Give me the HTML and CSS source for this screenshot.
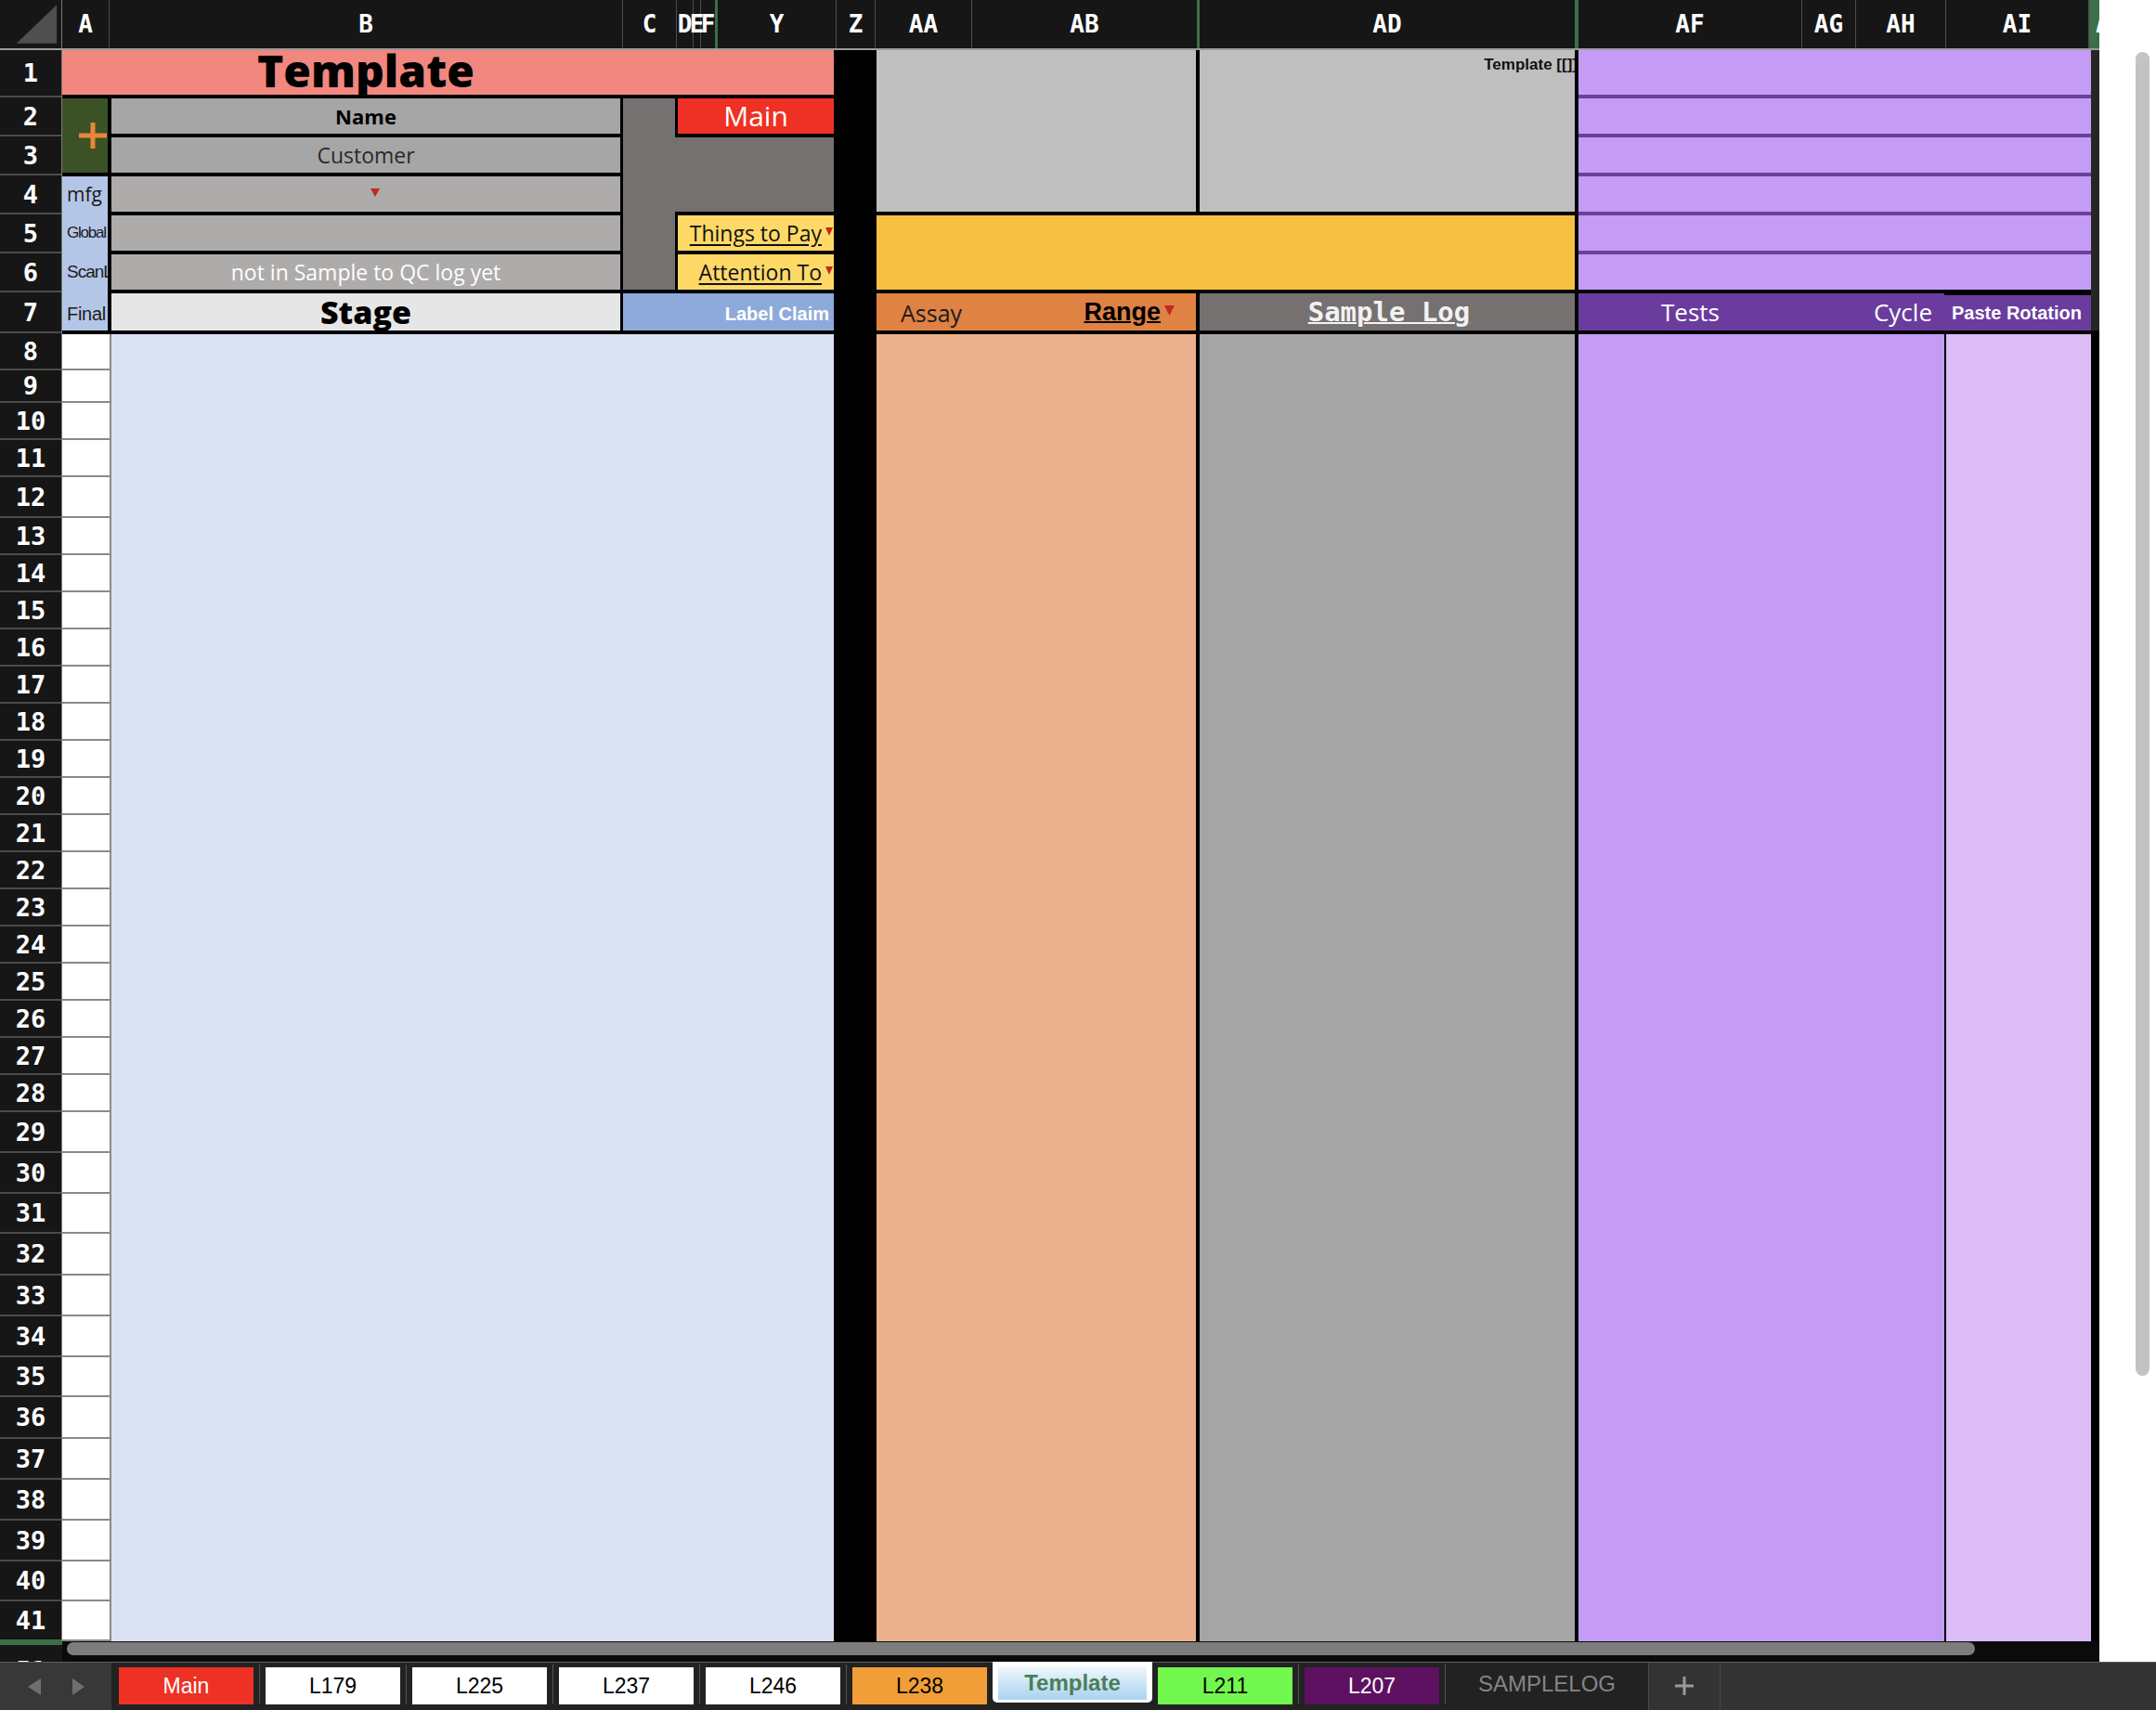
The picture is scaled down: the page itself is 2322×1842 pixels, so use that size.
FILE: index.html
```html
<!DOCTYPE html>
<html lang="en">
<head>
<meta charset="utf-8">
<title>Template</title>
<link rel="stylesheet" href="styles.css">
</head>
<body>
<div class="app">
  <div class="top">
    <div class="grid-area">
      <div class="colhdr">
        <div class="ch w-corner"><svg width="67" height="52" viewBox="0 0 67 52"><polygon points="18,47 62,5 62,47" fill="#4f4f4f"/></svg></div>
        <div class="ch w-a">A</div>
        <div class="ch w-b">B</div>
        <div class="ch w-c">C</div>
        <div class="ch w-d">D</div>
        <div class="ch w-e">E</div>
        <div class="ch w-f green">F</div>
        <div class="ch w-y">Y</div>
        <div class="ch w-z">Z</div>
        <div class="ch w-aa">AA</div>
        <div class="ch w-ab green">AB</div>
        <div class="ch w-ad green4">AD</div>
        <div class="ch w-af">AF</div>
        <div class="ch w-ag">AG</div>
        <div class="ch w-ah">AH</div>
        <div class="ch w-ai">AI</div>
        <div class="ch w-aj">A</div>
      </div>
      <div class="body">
        <div class="rowhdr">
          <div class="rh h51">1</div>
          <div class="rh h42">2</div>
          <div class="rh h42">3</div>
          <div class="rh h42">4</div>
          <div class="rh h42">5</div>
          <div class="rh h42">6</div>
          <div class="rh h44">7</div>
          <div class="rh h40">8</div>
          <div class="rh h35">9</div>
          <div class="rh h40">10</div>
          <div class="rh h40">11</div>
          <div class="rh h44">12</div>
          <div class="rh h40">13</div>
          <div class="rh h40">14</div>
          <div class="rh h40">15</div>
          <div class="rh h40">16</div>
          <div class="rh h40">17</div>
          <div class="rh h40">18</div>
          <div class="rh h40">19</div>
          <div class="rh h40">20</div>
          <div class="rh h40">21</div>
          <div class="rh h40">22</div>
          <div class="rh h40">23</div>
          <div class="rh h40">24</div>
          <div class="rh h40">25</div>
          <div class="rh h40">26</div>
          <div class="rh h40">27</div>
          <div class="rh h40">28</div>
          <div class="rh h44">29</div>
          <div class="rh h44">30</div>
          <div class="rh h43">31</div>
          <div class="rh h45">32</div>
          <div class="rh h44">33</div>
          <div class="rh h44">34</div>
          <div class="rh h43">35</div>
          <div class="rh h45">36</div>
          <div class="rh h44">37</div>
          <div class="rh h44">38</div>
          <div class="rh h44">39</div>
          <div class="rh h43">40</div>
          <div class="rh h43 last">41</div>
        </div>
        <div class="sheet">
          <div class="c-title"><span>Template</span></div>
          <div class="c-gray-aab"></div>
          <div class="c-gray-ad"><span>Template [[]]</span></div>
          <div class="c-ptop"><div></div><div></div><div></div><div></div><div></div><div></div></div>
          <div class="c-edge"></div>

          <div class="c-plus"><svg width="34" height="32" viewBox="0 0 34 32"><path d="M17 2V30M2 16H32" stroke="#e8873a" stroke-width="5" fill="none"/></svg></div>
          <div class="c-name">Name</div>
          <div class="c-customer">Customer</div>
          <div class="c-mfg"><svg width="10" height="10" viewBox="0 0 10 10"><polygon points="0,1 10,1 5,10" fill="#c5281f"/></svg></div>
          <div class="c-global"></div>
          <div class="c-scan">not in Sample to QC log yet</div>
          <div class="c-stage">Stage</div>

          <div class="c-cgray"></div>
          <div class="c-dygray"></div>
          <div class="c-main">Main</div>
          <div class="c-things"><span class="ul">Things to Pay</span><svg class="tri" width="8" height="9" viewBox="0 0 8 9"><polygon points="0,0 8,0 4,9" fill="#c5281f"/></svg></div>
          <div class="c-attn"><span class="ul">Attention To</span><svg class="tri" width="8" height="9" viewBox="0 0 8 9"><polygon points="0,0 8,0 4,9" fill="#c5281f"/></svg></div>
          <div class="c-label">Label Claim</div>

          <div class="c-ablue"></div>
          <div class="lbl l-mfg">mfg</div>
          <div class="lbl l-global">Global</div>
          <div class="lbl l-scan">ScanLog</div>
          <div class="lbl l-final">Final</div>

          <div class="c-yellow"></div>
          <div class="c-assay"><span class="assay">Assay</span><span class="range">Range</span><svg class="tri2" width="11" height="11" viewBox="0 0 11 11"><polygon points="0,0 11,0 5.5,11" fill="#c5281f"/></svg></div>
          <div class="c-samplelog"><span>Sample Log</span></div>
          <div class="c-tests"><span class="tests">Tests</span><span class="cycle">Cycle</span><span class="paste">Paste Rotation</span></div>

          <div class="c-acol">
            <div class="ac h39"></div><div class="ac h35"></div><div class="ac h40"></div><div class="ac h40"></div><div class="ac h44"></div>
            <div class="ac h40"></div><div class="ac h40"></div><div class="ac h40"></div><div class="ac h40"></div>
            <div class="ac h40"></div><div class="ac h40"></div><div class="ac h40"></div><div class="ac h40"></div>
            <div class="ac h40"></div><div class="ac h40"></div><div class="ac h40"></div><div class="ac h40"></div>
            <div class="ac h40"></div><div class="ac h40"></div><div class="ac h40"></div><div class="ac h40"></div>
            <div class="ac h44"></div><div class="ac h44"></div><div class="ac h43"></div><div class="ac h45"></div>
            <div class="ac h44"></div><div class="ac h44"></div><div class="ac h43"></div><div class="ac h45"></div>
            <div class="ac h44"></div><div class="ac h44"></div><div class="ac h44"></div><div class="ac h43"></div><div class="ac h43"></div>
          </div>
          <div class="c-blue"></div>
          <div class="c-salmon"></div>
          <div class="c-adgray"></div>
          <div class="c-purple"></div>
          <div class="c-ai"></div>
        </div>
      </div>
      <div class="hscroll">
        <div class="hs-left"><span>51</span></div>
        <div class="hs-track"><div class="hthumb"></div></div>
      </div>
    </div>
    <div class="vscroll"><div class="vthumb"></div></div>
  </div>
  <div class="tabbar">
    <div class="nav">
      <svg width="14" height="18" viewBox="0 0 14 18"><polygon points="14,0 14,18 0,9" fill="#6f6f6f"/></svg>
      <svg width="13" height="18" viewBox="0 0 13 18"><polygon points="0,0 0,18 13,9" fill="#6f6f6f"/></svg>
    </div>
    <div class="tabs">
      <div class="tab t-main">Main</div><i class="sep"></i>
      <div class="tab t-white">L179</div><i class="sep"></i>
      <div class="tab t-white">L225</div><i class="sep"></i>
      <div class="tab t-white">L237</div><i class="sep"></i>
      <div class="tab t-white">L246</div><i class="sep"></i>
      <div class="tab t-orange">L238</div>
      <div class="tab-active"><span>Template</span></div>
      <div class="tab t-green">L211</div><i class="sep"></i>
      <div class="tab t-purple">L207</div><i class="sep sep-r"></i>
      <div class="tab-plain">SAMPLELOG</div><i class="sep sep-n"></i>
    </div>
    <div class="addtab"><svg width="22" height="22" viewBox="0 0 22 22"><path d="M11 1V21M1 11H21" stroke="#9a9a9a" stroke-width="3" fill="none"/></svg></div>
    <div class="rest"></div>
  </div>
</div>
</body>
</html>
```

FILE: styles.css
```css
html, body {
  margin: 0;
  padding: 0;
  background: #ffffff;
  overflow: hidden;
}

.app {
  width: 2322px;
  height: 1842px;
  display: flex;
  flex-direction: column;
}

.top {
  display: flex;
  height: 1790px;
}

.grid-area {
  width: 2261px;
  display: flex;
  flex-direction: column;
}

/* Column header */
.colhdr {
  display: flex;
  height: 54px;
  box-sizing: border-box;
  background: #161616;
  border-bottom: 2px solid #9c9c9c;
}

.ch {
  box-sizing: border-box;
  height: 52px;
  display: flex;
  align-items: center;
  justify-content: center;
  border-right: 1px solid #4c4c4c;
  color: #ffffff;
  font-family: "DejaVu Sans Mono", monospace;
  font-weight: bold;
  font-size: 26px;
  white-space: nowrap;
}

.ch.green { border-right: 3px solid #3d6e48; }
.ch.green4 { border-right: 4px solid #3d6e48; }

.w-corner { width: 67px; border-right: 1px solid #777; }
.w-a { width: 51px; }
.w-b { width: 553px; }
.w-c { width: 58px; }
.w-d { width: 18px; }
.w-e { width: 8px; }
.w-f { width: 18px; }
.w-y { width: 128px; }
.w-z { width: 42px; }
.w-aa { width: 104px; }
.w-ab { width: 245px; }
.w-ad { width: 408px; }
.w-af { width: 241px; }
.w-ag { width: 58px; }
.w-ah { width: 97px; }
.w-ai { width: 154px; }
.w-aj {
  width: 11px;
  background: #3d6e48;
  border-right: 0;
  overflow: hidden;
  justify-content: flex-start;
  padding-left: 7px;
}

/* Body */
.body {
  display: flex;
  height: 1714px;
}

.rowhdr {
  width: 67px;
  box-sizing: border-box;
  background: #161616;
  border-right: 1px solid #7a7a7a;
  display: flex;
  flex-direction: column;
}

.rh {
  box-sizing: border-box;
  border-bottom: 2px solid #4b4b4b;
  display: flex;
  align-items: center;
  justify-content: center;
  color: #ffffff;
  font-family: "DejaVu Sans Mono", monospace;
  font-weight: bold;
  font-size: 27px;
}
.rh.last { border-bottom-color: #3d6e48; }

.h35 { height: 35px; }
.h39 { height: 39px; }
.h40 { height: 40px; }
.h42 { height: 42px; }
.h43 { height: 43px; }
.h44 { height: 44px; }
.h45 { height: 45px; }
.h51 { height: 51px; }

.sheet {
  display: grid;
  grid-template-columns: 49px 4px 548px 3px 56px 3px 168px 46px 344px 4px 404px 4px 394px 2px 156px 9px;
  grid-template-rows: 48px 4px 38px 4px 38px 4px 38px 4px 38px 4px 38px 4px 40px 4px 1408px;
  background: #000000;
  width: 2194px;
  font-family: "Open Sans", "Liberation Sans", sans-serif;
}

.c-title {
  grid-area: 1 / 1 / 2 / 8;
  background: #f1877e;
  display: grid;
  grid-template-columns: 53px 548px;
  align-items: center;
}
.c-title span {
  grid-column: 2;
  text-align: center;
  font-weight: 800;
  font-size: 48px;
  line-height: 1;
  color: #000;
  margin-top: -4px;
}

.c-gray-aab { grid-area: 1 / 9 / 8 / 10; background: #bfbfbf; }
.c-gray-ad {
  grid-area: 1 / 11 / 8 / 12;
  background: #bfbfbf;
  overflow: hidden;
  display: flex;
  justify-content: flex-end;
  align-items: flex-start;
}
.c-gray-ad span {
  font-family: "Liberation Sans", Arial, sans-serif;
  font-weight: bold;
  font-size: 17px;
  color: #111;
  margin-top: 6px;
  margin-right: -3px;
  white-space: nowrap;
}

.c-ptop {
  grid-area: 1 / 13 / 12 / 16;
  display: flex;
  flex-direction: column;
}
.c-ptop div {
  height: 38px;
  background: #c49cf6;
  border-top: 4px solid #6b3fa0;
}
.c-ptop div:first-child {
  height: 48px;
  border-top: 0;
}
.c-edge { grid-area: 1 / 16 / 14 / 17; background: #262626; }

.c-plus {
  grid-area: 3 / 1 / 6 / 2;
  background: #3a5226;
  display: flex;
  align-items: center;
  justify-content: flex-end;
  overflow: hidden;
}
.c-plus svg { margin-right: -1px; }

.c-name, .c-customer, .c-mfg, .c-global, .c-scan, .c-stage {
  display: flex;
  align-items: center;
  justify-content: center;
  white-space: nowrap;
}
.c-name { grid-area: 3 / 3 / 4 / 4; background: #a6a6a6; font-weight: 700; font-size: 22px; color: #000; }
.c-customer { grid-area: 5 / 3 / 6 / 4; background: #a6a6a6; font-size: 23px; color: #2a2a2a; }
.c-mfg { grid-area: 7 / 3 / 8 / 4; background: #aeabab; align-items: flex-start; }
.c-mfg svg { margin-top: 12px; margin-left: 20px; }
.c-global { grid-area: 9 / 3 / 10 / 4; background: #aeabab; }
.c-scan { grid-area: 11 / 3 / 12 / 4; background: #aeabab; font-size: 23px; color: #ffffff; }
.c-stage { grid-area: 13 / 3 / 14 / 4; background: #e7e6e6; font-weight: 800; font-size: 34px; color: #000; }

.c-cgray { grid-area: 3 / 5 / 12 / 6; background: #767171; }
.c-dygray { grid-area: 5 / 6 / 8 / 8; background: #767171; }
.c-main {
  grid-area: 3 / 7 / 4 / 8;
  background: #ee3124;
  color: #ffffff;
  font-size: 30px;
  display: flex;
  align-items: center;
  justify-content: center;
  line-height: 1;
}
.c-things, .c-attn {
  background: #ffd966;
  display: flex;
  align-items: center;
  justify-content: flex-end;
  font-size: 23px;
  color: #111;
  white-space: nowrap;
  overflow: hidden;
}
.c-things { grid-area: 9 / 7 / 10 / 8; }
.c-attn { grid-area: 11 / 7 / 12 / 8; }
.ul { text-decoration: underline; text-underline-offset: 3px; }
.tri { align-self: flex-start; margin: 13px 1px 0 4px; }

.c-label {
  grid-area: 13 / 5 / 14 / 8;
  background: #8eaadb;
  color: #ffffff;
  font-family: "Liberation Sans", Arial, sans-serif;
  font-weight: bold;
  font-size: 20px;
  display: flex;
  align-items: center;
  justify-content: flex-end;
  padding: 4px 5px 0 0;
}

.c-ablue { grid-area: 7 / 1 / 14 / 2; background: #b4c6e7; }
.lbl {
  display: flex;
  align-items: center;
  padding-left: 5px;
  color: #1b1b1b;
  overflow: hidden;
  white-space: nowrap;
  font-family: "Liberation Sans", Arial, sans-serif;
}
.l-mfg { grid-area: 7 / 1 / 8 / 2; font-size: 21px; font-family: "Open Sans", sans-serif; }
.l-global { grid-area: 9 / 1 / 10 / 2; font-size: 17px; letter-spacing: -1.2px; }
.l-scan { grid-area: 11 / 1 / 12 / 2; font-size: 19px; letter-spacing: -1px; }
.l-final { grid-area: 13 / 1 / 14 / 2; font-size: 20px; letter-spacing: -0.3px; padding-top: 4px; }

.c-yellow { grid-area: 9 / 9 / 12 / 12; background: #f6c142; }

.c-assay {
  grid-area: 13 / 9 / 14 / 10;
  background: #df8244;
  display: flex;
  align-items: center;
  padding: 0 23px 0 26px;
}
.assay { font-size: 25px; color: #1b1b1b; flex: 1; margin-top: 2px; }
.range {
  font-family: "Liberation Sans", Arial, sans-serif;
  font-weight: bold;
  font-size: 27px;
  color: #000;
  text-decoration: underline;
  text-decoration-thickness: 2px;
}
.tri2 { align-self: flex-start; margin: 13px 0 0 4px; }

.c-samplelog {
  grid-area: 13 / 11 / 14 / 12;
  background: #767171;
  display: flex;
  align-items: center;
  justify-content: center;
}
.c-samplelog span {
  font-family: "DejaVu Sans Mono", monospace;
  font-weight: bold;
  font-size: 29px;
  color: #f2f2f2;
  text-decoration: underline;
  text-decoration-thickness: 2px;
  margin-left: 4px;
}

.c-tests {
  grid-area: 13 / 13 / 14 / 16;
  background: #6a3c9e;
  display: flex;
  align-items: stretch;
  color: #ffffff;
}
.tests {
  width: 241px;
  display: flex;
  align-items: center;
  justify-content: center;
  font-size: 26px;
}
.cycle {
  width: 153px;
  box-sizing: border-box;
  padding-right: 13px;
  display: flex;
  align-items: center;
  justify-content: flex-end;
  font-size: 26px;
}
.paste {
  width: 158px;
  box-sizing: border-box;
  padding-left: 8px;
  border-top: 2px solid #000;
  display: flex;
  align-items: center;
  font-family: "Liberation Sans", Arial, sans-serif;
  font-weight: bold;
  font-size: 20px;
  white-space: nowrap;
}

.c-acol {
  grid-area: 15 / 1 / 16 / 3;
  display: flex;
  flex-direction: column;
}
.ac {
  box-sizing: border-box;
  background: #ffffff;
  border-bottom: 2px solid #8a8a8a;
  border-right: 2px solid #8a8a8a;
}
.c-blue { grid-area: 15 / 3 / 16 / 8; background: #d9e1f2; }
.c-salmon { grid-area: 15 / 9 / 16 / 10; background: #eab18c; }
.c-adgray { grid-area: 15 / 11 / 16 / 12; background: #a5a5a5; }
.c-purple { grid-area: 15 / 13 / 16 / 14; background: #c49cf6; }
.c-ai { grid-area: 15 / 15 / 16 / 16; background: #dcbcf6; }

/* Horizontal scroll */
.hscroll {
  display: flex;
  height: 22px;
}
.hs-left {
  width: 67px;
  box-sizing: border-box;
  background: #161616;
  border-top: 4px solid #3d6e48;
  overflow: hidden;
  display: flex;
  justify-content: center;
}
.hs-left span {
  color: #ffffff;
  font-family: "DejaVu Sans Mono", monospace;
  font-weight: bold;
  font-size: 27px;
  line-height: 1;
  margin-top: 14px;
}
.hs-track {
  flex: 1;
  background: #0b0b0b;
  padding: 1px 0 0 5px;
}
.hthumb {
  width: 2055px;
  height: 14px;
  border-radius: 7px;
  background: #7d7d7d;
}

/* Vertical scroll */
.vscroll {
  flex: 1;
  background: #ffffff;
  padding: 56px 0 0 39px;
}
.vthumb {
  width: 15px;
  height: 1426px;
  border-radius: 8px;
  background: #c3c3c3;
}

/* Tab bar */
.tabbar {
  height: 52px;
  display: flex;
  box-sizing: border-box;
  border-top: 1px solid #5e5e5e;
  background: #333333;
  font-family: "Liberation Sans", Arial, sans-serif;
  font-size: 23px;
}
.nav {
  width: 120px;
  background: #383838;
  display: flex;
  align-items: center;
  gap: 34px;
  padding-left: 30px;
  box-sizing: border-box;
}
.tabs {
  display: flex;
  align-items: flex-start;
  background: #222222;
  padding-left: 8px;
  width: 1656px;
  box-sizing: border-box;
}
.tab {
  width: 145px;
  height: 40px;
  margin-top: 5px;
  display: flex;
  align-items: center;
  justify-content: center;
}
.t-main { background: #ee3124; color: #ffffff; }
.t-white { background: #ffffff; color: #000000; }
.t-orange { background: #f19e38; color: #000000; }
.t-green { background: #72f74e; color: #000000; margin-left: 6px; }
.t-purple { background: #5e1160; color: #ffffff; }
.sep {
  width: 1px;
  height: 42px;
  margin: 2px 6px 0 6px;
  background: #555555;
}
.sep-r { margin-right: 0; }
.sep-n { margin: 0; height: 51px; background: #4a4a4a; }
.tab-active {
  width: 172px;
  height: 44px;
  margin: -1px 0 0 6px;
  box-sizing: border-box;
  padding: 5px 6px 3px 6px;
  background: #ffffff;
  border-radius: 0 0 5px 5px;
  display: flex;
}
.tab-active span {
  flex: 1;
  background: linear-gradient(#f0f7fc, #a9d3ef);
  color: #4a7f5a;
  font-weight: bold;
  font-size: 24px;
  display: flex;
  align-items: center;
  justify-content: center;
}
.tab-plain {
  width: 218px;
  height: 46px;
  display: flex;
  align-items: center;
  justify-content: center;
  color: #858585;
  font-size: 24px;
}
.addtab {
  width: 77px;
  box-sizing: border-box;
  border-right: 1px solid #4a4a4a;
  display: flex;
  align-items: center;
  justify-content: center;
  padding-bottom: 2px;
}
.rest { flex: 1; }
```
